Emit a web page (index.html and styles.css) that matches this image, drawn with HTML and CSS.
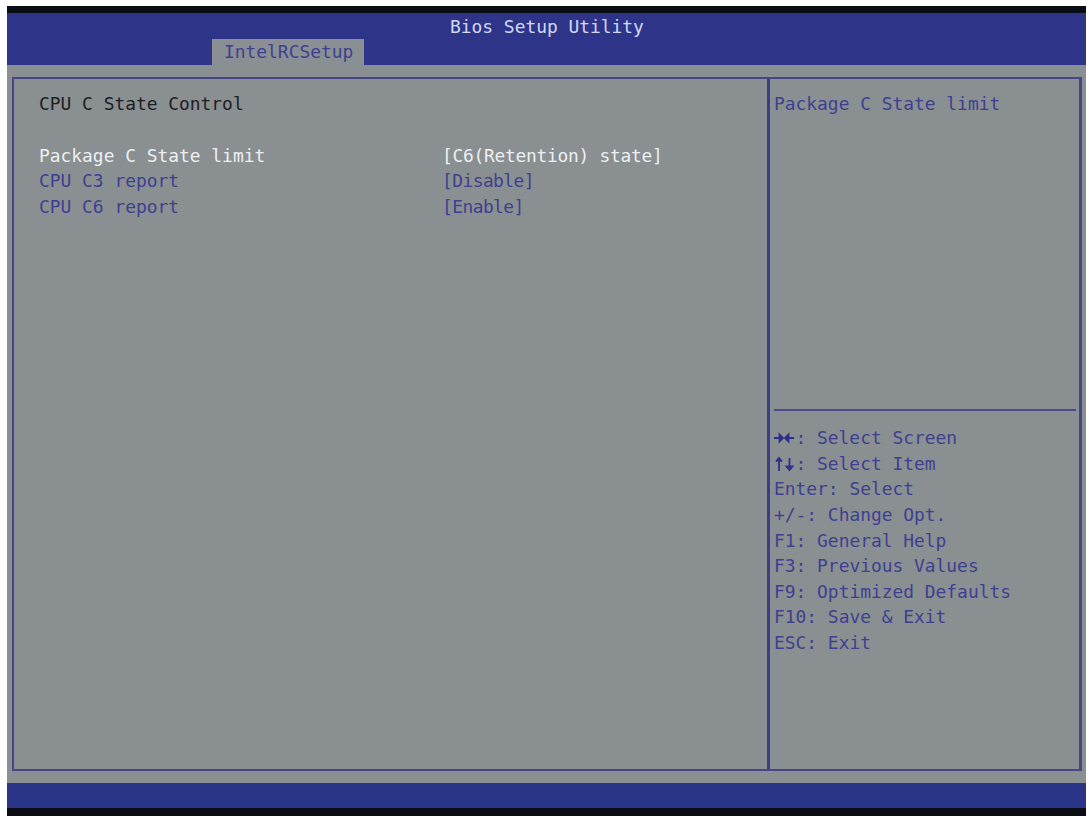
FILE: index.html
```html
<!DOCTYPE html>
<html lang="en">
<head>
<meta charset="utf-8">
<title>Bios Setup Utility</title>
<link rel="stylesheet" href="styles.css">
</head>
<body>
<div class="screen">
  <header class="header">
    <div class="title">Bios Setup Utility</div>
    <div class="tab">IntelRCSetup</div>
  </header>
  <div class="body">
    <div class="frame">
      <main class="main">
        <div class="heading">CPU C State Control</div>
        <div class="row selected"><span class="name">Package C State limit</span><span class="value">[C6(Retention) state]</span></div>
        <div class="row"><span class="name">CPU C3 report</span><span class="value short">[Disable]</span></div>
        <div class="row"><span class="name">CPU C6 report</span><span class="value short">[Enable]</span></div>
      </main>
      <aside class="side">
        <div class="help">Package C State limit</div>
        <div class="keys">
          <div class="key"><svg class="arrows" viewBox="0 0 21 16"><path d="M0 8H9M11 8H20M5.500 4.500V11.500L9 8ZM14.500 4.500V11.500L11 8Z"/></svg>: Select Screen</div>
          <div class="key"><svg class="arrows" viewBox="0 0 21 16"><path d="M5 15V2M2 5.500L5 2L8 5.500M15.500 2V14M12.500 10.500L15.500 14L18.500 10.500Z"/></svg>: Select Item</div>
          <div class="key">Enter: Select</div>
          <div class="key">+/-: Change Opt.</div>
          <div class="key">F1: General Help</div>
          <div class="key">F3: Previous Values</div>
          <div class="key">F9: Optimized Defaults</div>
          <div class="key">F10: Save &amp; Exit</div>
          <div class="key">ESC: Exit</div>
        </div>
      </aside>
    </div>
  </div>
  <footer class="footer"></footer>
</div>
</body>
</html>
```
FILE: styles.css
```css
* { box-sizing: border-box; }
body {
  margin: 0;
  padding: 6px 4px 1px 7px;
  height: 817px;
  overflow: hidden;
  background: #fff;
}
.screen {
  display: flex;
  flex-direction: column;
  height: 810px;
  background: #8a8f91;
  color: #3f3f91;
  font: 17.9px/25.65px "DejaVu Sans Mono", monospace;
  white-space: nowrap;
}
.header {
  height: 59px;
  border-top: 7px solid #0b0d14;
  background: #2e3589;
}
.title {
  height: 26px;
  padding-left: 443px;
  line-height: 28px;
  color: #d3d8f4;
}
.tab {
  width: 152px;
  height: 26px;
  margin-left: 205px;
  padding-left: 12px;
  background: #8a8f94;
  line-height: 26px;
}
.body {
  flex: 1;
  padding: 12px 4px 12px 5px;
}
.frame {
  display: flex;
  height: 694px;
  border: 2px solid #454587;
  border-width: 2px 3px 2px 2px;
}
.main {
  width: 753px;
  padding: 12px 0 0 25px;
}
.heading {
  margin-bottom: 26px;
  color: #1d2023;
}
.row { display: flex; }
.name { width: 403px; }
.value { letter-spacing: -0.27px; }
.short { letter-spacing: -0.55px; }
.selected { color: #edf0f1; }
.side {
  flex: 1;
  padding: 12px 3px 0 4px;
  border-left: 3px solid #3d3d87;
}
.help {
  height: 320px;
  border-bottom: 2px solid #4a4a8c;
}
.keys { padding-top: 14px; }
.key { height: 25.65px; }
.arrows {
  width: 21px;
  height: 16px;
  margin-right: 0.5px;
  vertical-align: -2px;
  fill: #30308c;
  stroke: #30308c;
  stroke-width: 1.8;
}
.footer {
  height: 33px;
  background: #2b3587;
  border-bottom: 8px solid #0b0d12;
}
```
